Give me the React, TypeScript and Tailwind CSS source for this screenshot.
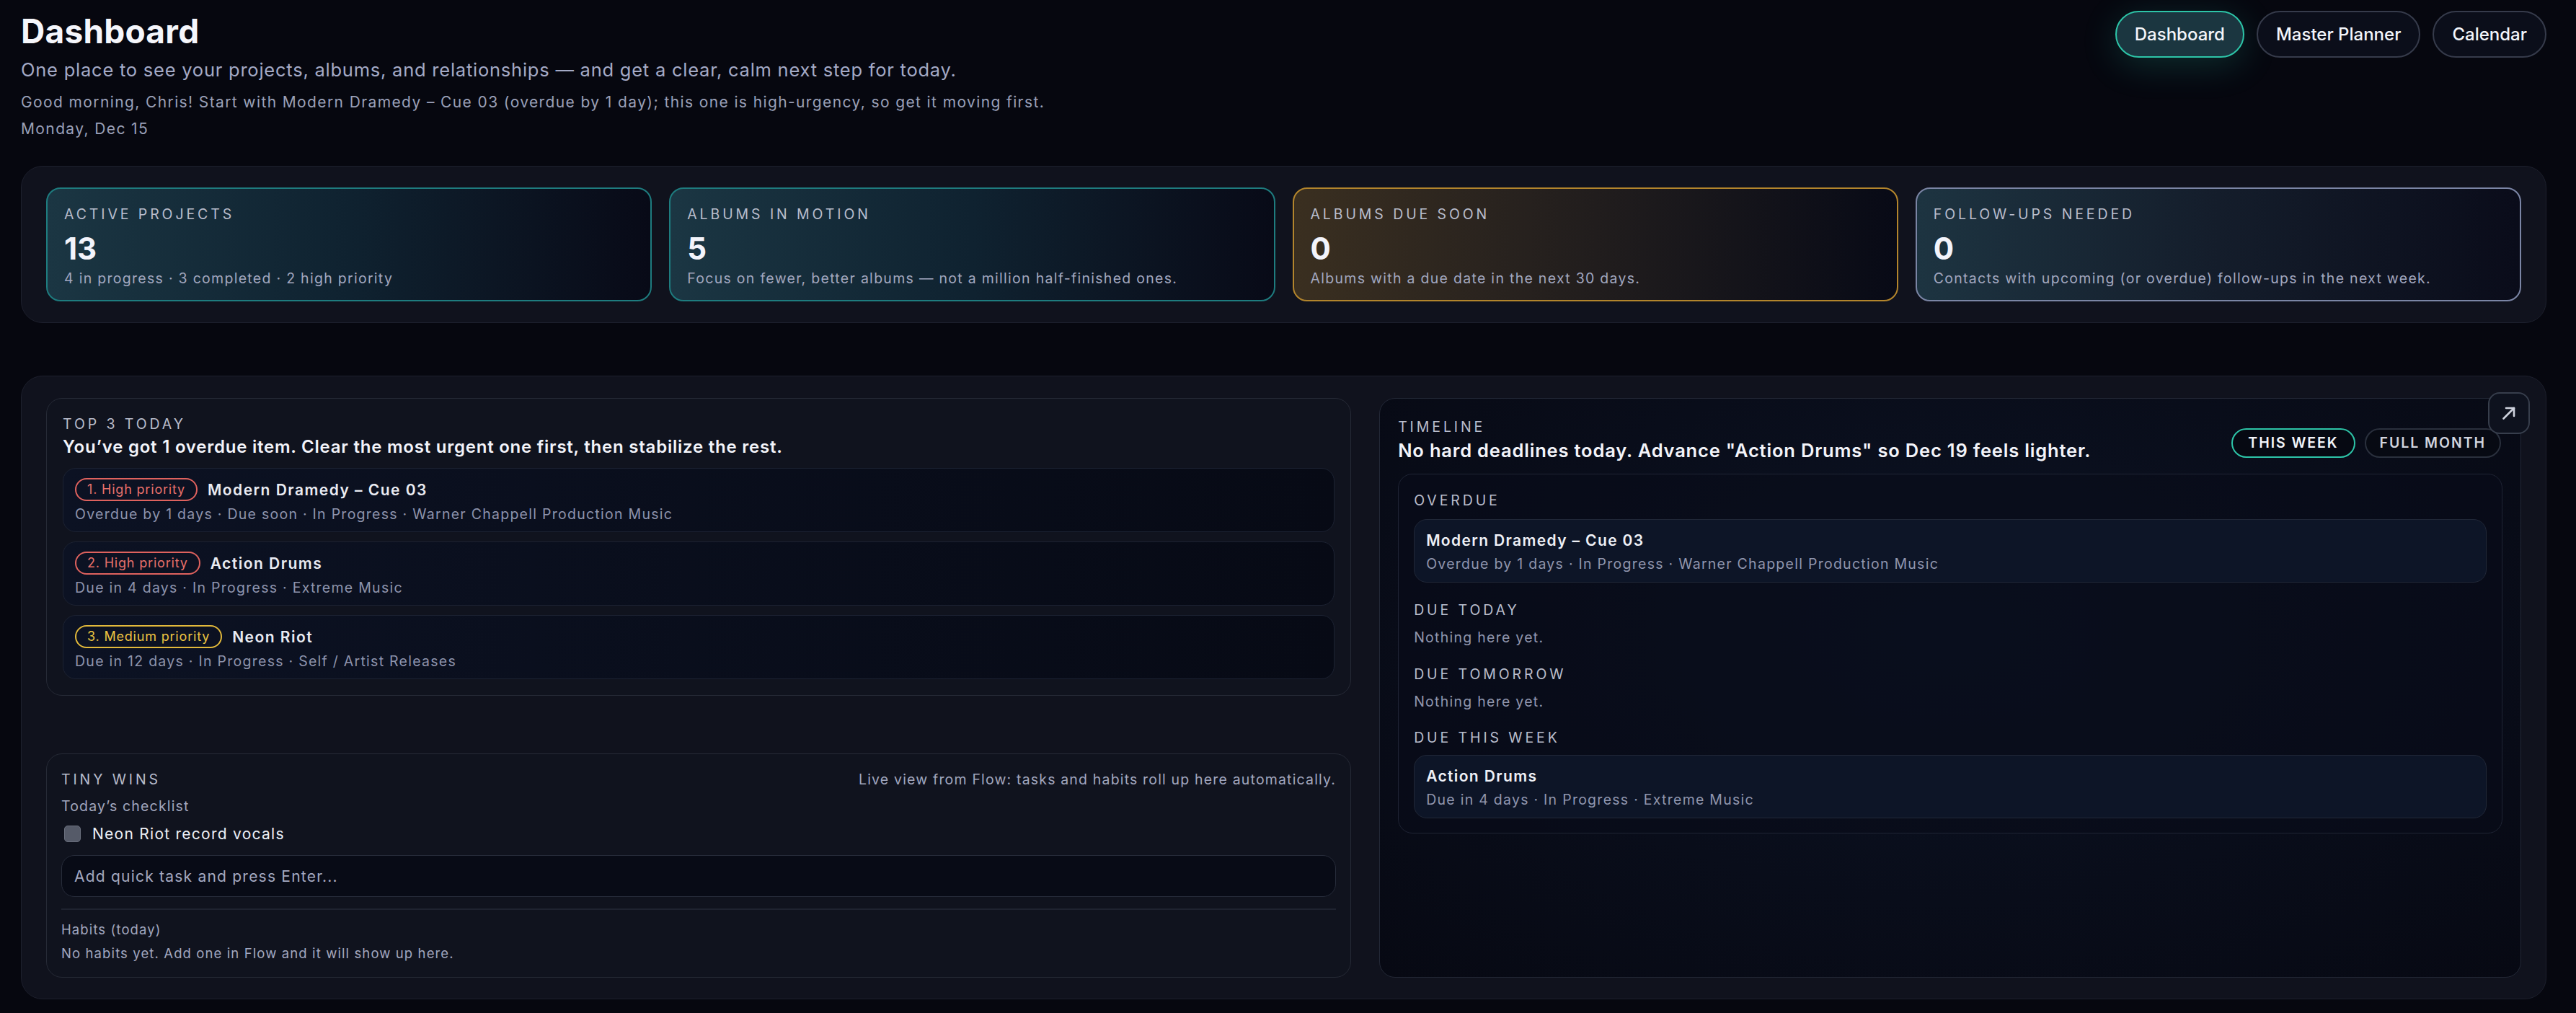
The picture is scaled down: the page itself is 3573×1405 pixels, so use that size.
import React from 'react';

type Tone = 'teal' | 'amber' | 'slate';

const stats: { label: string; value: string; sub: string; tone: Tone }[] = [
  { label: 'Active projects', value: '13', sub: '4 in progress · 3 completed · 2 high priority', tone: 'teal' },
  { label: 'Albums in motion', value: '5', sub: 'Focus on fewer, better albums — not a million half-finished ones.', tone: 'teal' },
  { label: 'Albums due soon', value: '0', sub: 'Albums with a due date in the next 30 days.', tone: 'amber' },
  { label: 'Follow-ups needed', value: '0', sub: 'Contacts with upcoming (or overdue) follow-ups in the next week.', tone: 'slate' },
];

const toneClass: Record<Tone, string> = {
  teal: 'border-[#1e7c7f] bg-linear-to-r from-[#1b3643] via-[#0f2230] to-[#080a17]',
  amber: 'border-[#b3852c] bg-linear-to-r from-[#3a2f20] via-[#211d1d] to-[#080a16]',
  slate: 'border-[#7b85a5] bg-linear-to-r from-[#1d3441] via-[#141d2b] to-[#0a0c1a]',
};

const top3 = [
  { rank: '1. High priority', title: 'Modern Dramedy – Cue 03', meta: 'Overdue by 1 days · Due soon · In Progress · Warner Chappell Production Music', level: 'high' },
  { rank: '2. High priority', title: 'Action Drums', meta: 'Due in 4 days · In Progress · Extreme Music', level: 'high' },
  { rank: '3. Medium priority', title: 'Neon Riot', meta: 'Due in 12 days · In Progress · Self / Artist Releases', level: 'medium' },
];

const Label: React.FC<{ children: React.ReactNode; className?: string }> = ({ children, className = '' }) => (
  <div className={`text-[19.5px] leading-[27px] uppercase tracking-[0.2em] text-[#b9bdcc] ${className}`}>{children}</div>
);

const TimelineItem: React.FC<{ title: string; meta: string }> = ({ title, meta }) => (
  <div className="rounded-[18px] border border-[#212838] bg-[#0d1527] px-[16px] pt-[14px] pb-[11px]">
    <div className="text-[21px] leading-[29px] font-semibold tracking-[0.065em] text-[#eef0f6]">{title}</div>
    <div className="mt-[5px] text-[19.5px] leading-[27px] tracking-[0.065em] text-[#9096ae]">{meta}</div>
  </div>
);

export default function App() {
  return (
    <div className="min-h-screen bg-[#06070f] pl-[29px] pr-[41px] pt-[16px] pb-[22px] font-['Inter',sans-serif] text-white">
      {/* header */}
      <div className="flex items-start justify-between">
        <div>
          <h1 className="text-[46px] leading-[55px] font-bold tracking-[0.005em] text-[#f5f6fb]">Dashboard</h1>
          <p className="mt-[8px] text-[25.5px] leading-[36px] tracking-[0.03em] text-[#a4aac6]">
            One place to see your projects, albums, and relationships — and get a clear, calm next step for today.
          </p>
          <p className="mt-[12px] text-[21px] leading-[29px] tracking-[0.066em] text-[#9aa0b8]">
            Good morning, Chris! Start with Modern Dramedy – Cue 03 (overdue by 1 day); this one is high-urgency, so get it moving first.
          </p>
          <p className="mt-[8px] text-[21px] leading-[29px] tracking-[0.066em] text-[#9aa0b8]">Monday, Dec 15</p>
        </div>
        <nav className="flex gap-[17px] -mt-[1px]">
          <button className="h-[65px] rounded-full border-2 border-[#2dc5a8] bg-[#1b3640] px-[25px] text-[24px] font-medium text-[#f3f5fa] shadow-[0_10px_50px_rgba(45,197,168,0.2)]">
            Dashboard
          </button>
          <button className="h-[65px] rounded-full border-2 border-[#363b4b] bg-[#0b0e1a] px-[25px] text-[24px] font-medium text-[#f3f5fa]">
            Master Planner
          </button>
          <button className="h-[65px] rounded-full border-2 border-[#363b4b] bg-[#0b0e1a] px-[25px] text-[24px] font-medium text-[#f3f5fa]">
            Calendar
          </button>
        </nav>
      </div>

      {/* stats */}
      <section className="mt-[37px] grid grid-cols-4 gap-[24px] rounded-[30px] border border-[#1d202d] bg-[#10121d] px-[34px] py-[29px]">
        {stats.map((s) => (
          <div key={s.label} className={`rounded-[20px] border-2 px-[23px] pt-[22px] pb-[16px] ${toneClass[s.tone]}`}>
            <Label>{s.label}</Label>
            <div className="mt-[9px] text-[42px] leading-[50px] font-bold text-[#f3f4fb]">{s.value}</div>
            <div className="mt-[3px] text-[19.5px] leading-[27px] tracking-[0.066em] text-[#a2a7bf]">{s.sub}</div>
          </div>
        ))}
      </section>

      {/* main */}
      <section className="mt-[73px] grid grid-cols-[8fr_7fr] gap-[39px] rounded-[30px] border border-[#1d202d] bg-[#10121d] px-[34px] pt-[30px] pb-[29px]">
        <div className="flex flex-col gap-[80px]">
          {/* top 3 */}
          <div className="rounded-[22px] border border-[#262a36] bg-[#10131e] px-[22px] pt-[22px] pb-[22px]">
            <Label>Top 3 today</Label>
            <div className="mt-[1px] text-[24px] leading-[34px] font-semibold tracking-[0.032em] text-[#f3f4fa]">
              You’ve got 1 overdue item. Clear the most urgent one first, then stabilize the rest.
            </div>
            <div className="mt-[12px] flex flex-col gap-[13px]">
              {top3.map((t) => (
                <div key={t.title} className="rounded-[18px] border border-[#1c2232] bg-linear-to-r from-[#0c1223] to-[#070a15] px-[16px] pt-[13px] pb-[10px]">
                  <div className="flex items-center gap-[14px]">
                    <span
                      className={
                        t.level === 'high'
                          ? 'h-[32px] rounded-full border-2 border-[#df625e] px-[15px] text-[18px] leading-[28px] tracking-[0.045em] text-[#e8706a]'
                          : 'h-[32px] rounded-full border-2 border-[#e2b93b] px-[15px] text-[18px] leading-[28px] tracking-[0.045em] text-[#ecc441]'
                      }
                    >
                      {t.rank}
                    </span>
                    <span className="text-[21px] leading-[29px] font-semibold tracking-[0.07em] text-[#e9ebf2]">{t.title}</span>
                  </div>
                  <div className="mt-[5px] text-[19.5px] leading-[27px] tracking-[0.065em] text-[#8e94ad]">{t.meta}</div>
                </div>
              ))}
            </div>
          </div>

          {/* tiny wins */}
          <div className="rounded-[22px] border border-[#262a36] bg-[#10131e] px-[20px] pt-[22px] pb-[20px]">
            <div className="flex items-center justify-between">
              <Label>Tiny wins</Label>
              <div className="text-[19.5px] leading-[27px] tracking-[0.06em] text-[#a2a7bf]">
                Live view from Flow: tasks and habits roll up here automatically.
              </div>
            </div>
            <div className="mt-[10px] text-[19.5px] leading-[27px] tracking-[0.06em] text-[#a2a7bf]">Today’s checklist</div>
            <label className="mt-[10px] flex items-center gap-[16px]">
              <span className="ml-[4px] h-[23px] w-[23px] rounded-[5px] border border-[#6a6f7d] bg-[#555a68]" />
              <span className="text-[21px] leading-[29px] tracking-[0.06em] text-[#eef0f6]">Neon Riot record vocals</span>
            </label>
            <input
              placeholder="Add quick task and press Enter..."
              className="mt-[15px] h-[58px] w-full rounded-[18px] border border-[#272c3a] bg-[#080b16] px-[17px] text-[21px] tracking-[0.058em] text-white outline-none placeholder:text-[#a4a9c1]"
            />
            <div className="mt-[16px] border-t-2 border-[#1f2330] pt-[15px]">
              <div className="text-[18.5px] leading-[25px] tracking-[0.06em] text-[#a2a7bf]">Habits (today)</div>
              <div className="mt-[8px] text-[18.5px] leading-[25px] tracking-[0.06em] text-[#a2a7bf]">
                No habits yet. Add one in Flow and it will show up here.
              </div>
            </div>
          </div>
        </div>

        {/* timeline */}
        <div className="relative rounded-[22px] border border-[#232836] bg-[radial-gradient(ellipse_at_50%_40%,#0c1324_0%,#090d1a_55%,#070913_100%)] px-[25px] pt-[26px]">
          <button className="absolute -top-[9px] -right-[13px] flex h-[58px] w-[58px] items-center justify-center rounded-[16px] border-2 border-[#373e4c] bg-[#0e121e]">
            <svg width="18" height="18" viewBox="0 0 18 18" fill="none" stroke="#cfd3de" strokeWidth="2.6" strokeLinecap="round" strokeLinejoin="round">
              <path d="M1.5 16.5 16 2" />
              <path d="M5 2h11v11" />
            </svg>
          </button>
          <div className="flex items-center justify-between">
            <div>
              <Label>Timeline</Label>
              <div className="mt-[1px] text-[25.5px] leading-[35px] font-semibold tracking-[0.032em] text-[#f3f4fa]">
                No hard deadlines today. Advance "Action Drums" so Dec 19 feels lighter.
              </div>
            </div>
            <div className="mr-[2px] mt-[8px] flex gap-[13px]">
              <button className="h-[41px] rounded-full border-2 border-[#2dc5a8] bg-[#060912] px-[21px] text-[19.5px] font-semibold uppercase tracking-[0.1em] text-[#f3f5fa]">
                This week
              </button>
              <button className="h-[41px] rounded-full border-2 border-[#2a303d] bg-[#070a13] px-[19px] text-[19.5px] font-semibold uppercase tracking-[0.1em] text-[#d2d5df]">
                Full month
              </button>
            </div>
          </div>

          <div className="mt-[15px] rounded-[20px] border border-[#1f2434] bg-[#080c19]/60 px-[21px] pt-[23px] pb-[20px]">
            <Label>Overdue</Label>
            <div className="mt-[12px]">
              <TimelineItem title="Modern Dramedy – Cue 03" meta="Overdue by 1 days · In Progress · Warner Chappell Production Music" />
            </div>
            <Label className="mt-[25px]">Due today</Label>
            <div className="mt-[11px] text-[19.5px] leading-[27px] tracking-[0.065em] text-[#9096ae]">Nothing here yet.</div>
            <Label className="mt-[24px]">Due tomorrow</Label>
            <div className="mt-[11px] text-[19.5px] leading-[27px] tracking-[0.065em] text-[#9096ae]">Nothing here yet.</div>
            <Label className="mt-[23px]">Due this week</Label>
            <div className="mt-[10px]">
              <TimelineItem title="Action Drums" meta="Due in 4 days · In Progress · Extreme Music" />
            </div>
          </div>
        </div>
      </section>
    </div>
  );
}
